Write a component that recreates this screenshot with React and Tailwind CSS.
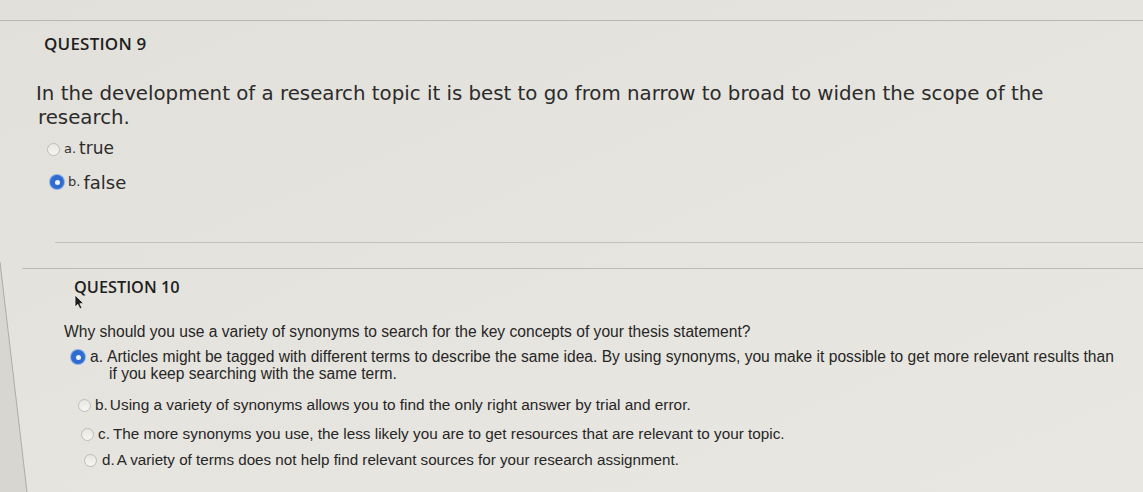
import React from "react";

function Radio({ checked }) {
  if (checked) {
    return (
      <span className="inline-flex h-[14px] w-[14px] shrink-0 items-center justify-center rounded-full bg-[#2f6bd1] shadow-[0_0_0_1px_#8fb0e6]">
        <span className="h-[5px] w-[5px] rounded-full bg-[#eef2fb]" />
      </span>
    );
  }
  return (
    <span className="inline-block h-[13px] w-[13px] shrink-0 rounded-full border border-[#bebdb9] bg-gradient-to-b from-[#e8e7e4] to-[#f6f5f2]" />
  );
}

export default function App() {
  const arial = { fontFamily: '"Liberation Sans", Arial, sans-serif' };
  return (
    <div className="relative h-[492px] w-[1143px] overflow-hidden bg-gradient-to-br from-[#e2e0db] via-[#e6e4df] to-[#e9e7e2] text-[#2a2a2a]">
      {/* screen edge at left */}
      <svg className="pointer-events-none absolute left-0 top-0" width="40" height="492">
        <polygon points="0,262 27,492 0,492" fill="#d8d6d1" />
        <line x1="0" y1="262" x2="27" y2="492" stroke="#aeaca7" strokeWidth="1" />
      </svg>

      <div className="pt-[20px]">
        <div className="h-px bg-[#b8b6b1]" />
      </div>

      {/* Question 9 */}
      <div className="pl-[44px] pt-[11px]">
        <div className="text-[17px] font-semibold leading-[24px] tracking-[0.2px] text-[#1f1f1f]" style={{ fontFamily: '"Open Sans", sans-serif' }}>
          QUESTION 9
        </div>
      </div>
      <div className="pl-[36px] pt-[26px] text-[19.8px] leading-[24px] text-[#2b2b2b]" style={{ fontFamily: '"DejaVu Sans", Verdana, sans-serif' }}>
        In the development of a research topic it is best to go from narrow to broad to widen the scope of the
        <br />
        <span className="pl-[2px]">research.</span>
      </div>
      <div style={{ fontFamily: '"DejaVu Sans", Verdana, sans-serif' }}>
        <div className="mt-[7px] flex h-[24px] items-center pl-[47px]">
          <Radio />
          <span className="ml-[4px] text-[13px] text-[#333]">a.</span>
          <span className="ml-[3px] text-[17px] text-[#2b2b2b]">true</span>
        </div>
        <div className="mt-[9px] flex h-[24px] items-center pl-[50px]">
          <Radio checked />
          <span className="ml-[4px] text-[13px] text-[#333]">b.</span>
          <span className="ml-[3px] text-[18px] text-[#2b2b2b]">false</span>
        </div>
      </div>

      <div className="mt-[48px] ml-[55px] h-px bg-[#c2c0bb]" />
      <div className="mt-[25px] ml-[22px] h-px bg-[#bcbab5]" />

      {/* Question 10 */}
      <div className="pl-[74px] pt-[7px]">
        <div className="text-[16.3px] font-semibold leading-[22px] text-[#1f1f1f]" style={{ fontFamily: '"Open Sans", sans-serif' }}>
          QUESTION 10
        </div>
      </div>
      <svg className="pointer-events-none absolute left-[74px] top-[294px]" width="12" height="16" viewBox="0 0 12 16">
        <path d="M1 1 L1 13 L3.8 10.4 L6 15 L8 14.1 L5.9 9.7 L9.8 9.7 Z" fill="#1d1d1d" stroke="#f2f2f2" strokeWidth="0.8" strokeLinejoin="round" />
      </svg>

      <div className="pl-[64px] pt-[24px] text-[15.6px] leading-[20px] text-[#262626]" style={arial}>
        Why should you use a variety of synonyms to search for the key concepts of your thesis statement?
      </div>

      <div style={arial} className="text-[15.4px] text-[#262626]">
        <div className="mt-[6px] flex items-start pl-[71px] text-[15.6px]">
          <span className="mt-[2px] flex"><Radio checked /></span>
          <span className="ml-[5px] leading-[17px]">a.</span>
          <span className="ml-[4px] leading-[17px]">
            Articles might be tagged with different terms to describe the same idea. By using synonyms, you make it possible to get more relevant results than
            <br />
            <span className="pl-[2px]">if you keep searching with the same term.</span>
          </span>
        </div>
        <div className="mt-[13px] flex h-[20px] items-center pl-[78px]">
          <Radio />
          <span className="ml-[4px]">b.</span>
          <span className="ml-[2px]">Using a variety of synonyms allows you to find the only right answer by trial and error.</span>
        </div>
        <div className="mt-[9px] flex h-[20px] items-center pl-[81px] text-[15.3px]">
          <Radio />
          <span className="ml-[4px]">c.</span>
          <span className="ml-[3px]">The more synonyms you use, the less likely you are to get resources that are relevant to your topic.</span>
        </div>
        <div className="mt-[6px] flex h-[20px] items-center pl-[84px] text-[15.2px]">
          <Radio />
          <span className="ml-[5px]">d.</span>
          <span className="ml-[2px]">A variety of terms does not help find relevant sources for your research assignment.</span>
        </div>
      </div>
    </div>
  );
}
